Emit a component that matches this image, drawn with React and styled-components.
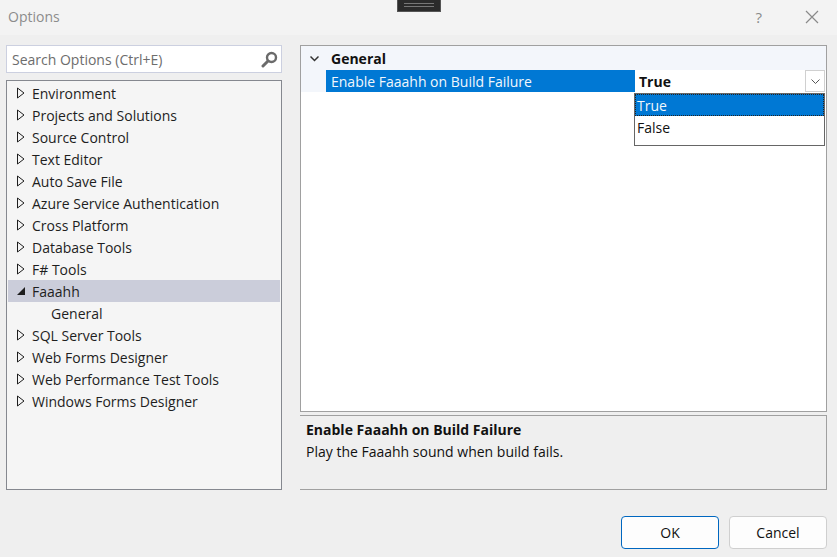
import React from 'react';
import styled, { createGlobalStyle } from 'styled-components';

const GlobalStyle = createGlobalStyle`
  html, body {
    margin: 0;
    padding: 0;
    background: #efefef;
  }
  body {
    font-family: "Open Sans", "Noto Sans", sans-serif;
    font-size: 14px;
    color: #1b1b1b;
  }
`;

const treeItems = [
  { label: 'Environment' },
  { label: 'Projects and Solutions' },
  { label: 'Source Control' },
  { label: 'Text Editor' },
  { label: 'Auto Save File' },
  { label: 'Azure Service Authentication' },
  { label: 'Cross Platform' },
  { label: 'Database Tools' },
  { label: 'F# Tools' },
  { label: 'Faaahh', open: true },
  { label: 'General', child: true },
  { label: 'SQL Server Tools' },
  { label: 'Web Forms Designer' },
  { label: 'Web Performance Test Tools' },
  { label: 'Windows Forms Designer' },
];

const SearchIcon = () => (
  <svg width="17" height="17" viewBox="0 0 17 17">
    <circle cx="10.5" cy="6.5" r="4.5" fill="none" stroke="#6b6b6b" strokeWidth="2.4" />
    <path d="M7 10 L2 15" stroke="#6b6b6b" strokeWidth="3" strokeLinecap="round" />
  </svg>
);

const Arrow = ({ open }) =>
  open ? (
    <svg width="10" height="10" viewBox="0 0 10 10">
      <path d="M9 1 V9 H1 Z" fill="#1e1e1e" />
    </svg>
  ) : (
    <svg width="10" height="12" viewBox="0 0 10 12">
      <path d="M1.5 1 L8 6 L1.5 11 Z" fill="none" stroke="#1e1e1e" strokeWidth="1" />
    </svg>
  );

const Chevron = ({ size = 9, color = '#444', width = 1 }) => (
  <svg width={size} height={size} viewBox="0 0 9 9">
    <path d="M0.5 2.5 L4.5 6.5 L8.5 2.5" fill="none" stroke={color} strokeWidth={width} />
  </svg>
);

const App = () => {
  return (
    <Dialog>
      <GlobalStyle />
      <Grip>
        <GripLine />
      </Grip>
      <TitleBar>
        <Title>Options</Title>
        <TitleButtons>
          <Help>?</Help>
          <svg width="14" height="14" viewBox="0 0 14 14">
            <path d="M1 1 L13 13 M13 1 L1 13" stroke="#8a8a8a" strokeWidth="1.2" />
          </svg>
        </TitleButtons>
      </TitleBar>
      <Body>
        <LeftColumn>
          <Search>
            <SearchText>Search Options (Ctrl+E)</SearchText>
            <SearchIcon />
          </Search>
          <Tree>
            {treeItems.map((item) => (
              <TreeRow key={item.label} $selected={item.open} $child={item.child}>
                {!item.child && (
                  <ArrowSlot>
                    <Arrow open={item.open} />
                  </ArrowSlot>
                )}
                {item.label}
              </TreeRow>
            ))}
          </Tree>
        </LeftColumn>
        <RightColumn>
          <PropertyGrid>
            <CategoryRow>
              <CategoryToggle>
                <Chevron size={9} color="#333" width={1.5} />
              </CategoryToggle>
              General
            </CategoryRow>
            <PropertyRow>
              <PropertyGutter />
              <PropertyName>Enable Faaahh on Build Failure</PropertyName>
              <PropertyValue>True</PropertyValue>
              <DropButton>
                <Chevron size={9} color="#555" />
              </DropButton>
            </PropertyRow>
            <DropList>
              <DropItem $active>True</DropItem>
              <DropItem>False</DropItem>
            </DropList>
          </PropertyGrid>
          <Description>
            <DescriptionTitle>Enable Faaahh on Build Failure</DescriptionTitle>
            <div>Play the Faaahh sound when build fails.</div>
          </Description>
        </RightColumn>
      </Body>
      <Footer>
        <Button $primary>OK</Button>
        <Button>Cancel</Button>
      </Footer>
    </Dialog>
  );
};

const Dialog = styled.div`
  position: relative;
  width: 837px;
  height: 557px;
  overflow: hidden;
  background: #efefef;
`;

const Grip = styled.div`
  position: absolute;
  top: 0;
  left: 397px;
  width: 44px;
  height: 12px;
  box-sizing: border-box;
  padding-top: 3px;
  background: #2b2b2b;
  border: 1px solid #555;
  border-top: 0;
  display: flex;
  justify-content: center;
`;

const GripLine = styled.div`
  width: 30px;
  height: 4px;
  box-sizing: border-box;
  border-top: 1px solid #777;
  border-bottom: 1px solid #777;
`;

const TitleBar = styled.div`
  height: 35px;
  background: #f3f3f3;
  display: flex;
  align-items: center;
  justify-content: space-between;
  padding: 0 18px 2px 8px;
  box-sizing: border-box;
`;

const Title = styled.div`
  color: #8c8c8c;
  font-size: 14px;
`;

const TitleButtons = styled.div`
  display: flex;
  align-items: center;
  gap: 43px;
`;

const Help = styled.div`
  color: #8a8a8a;
  font-size: 15px;
`;

const Body = styled.div`
  display: flex;
  padding: 10px 10px 0 6px;
  gap: 18px;
`;

const LeftColumn = styled.div`
  width: 276px;
  display: flex;
  flex-direction: column;
  gap: 7px;
`;

const Search = styled.div`
  height: 28px;
  box-sizing: border-box;
  background: #fff;
  border: 1px solid #ccd0e0;
  display: flex;
  align-items: center;
  justify-content: space-between;
  padding: 0 3px 0 5px;
`;

const SearchText = styled.span`
  color: #6d6d6d;
`;

const Tree = styled.div`
  height: 410px;
  box-sizing: border-box;
  background: #f5f5f5;
  border: 1px solid #85888f;
  padding: 1px;
`;

const TreeRow = styled.div`
  height: 22px;
  display: flex;
  align-items: center;
  padding-left: ${(p) => (p.$child ? '43px' : '8px')};
  background: ${(p) => (p.$selected ? '#cbcdda' : 'transparent')};
  color: #1e1e1e;
  white-space: nowrap;
`;

const ArrowSlot = styled.span`
  width: 16px;
  display: flex;
  align-items: center;
`;

const RightColumn = styled.div`
  width: 527px;
  display: flex;
  flex-direction: column;
  gap: 3px;
`;

const PropertyGrid = styled.div`
  position: relative;
  height: 367px;
  box-sizing: border-box;
  background: #fff;
  border: 1px solid #a0a0a0;
`;

const CategoryRow = styled.div`
  height: 24px;
  display: flex;
  align-items: center;
  background: #f3f6fb;
  font-weight: 700;
  color: #111;
`;

const CategoryToggle = styled.span`
  width: 30px;
  display: flex;
  justify-content: center;
  padding-right: 4px;
  box-sizing: border-box;
`;

const PropertyRow = styled.div`
  position: relative;
  height: 22px;
  display: flex;
  align-items: center;
`;

const PropertyGutter = styled.div`
  width: 25px;
  height: 100%;
  background: #f3f6fb;
`;

const PropertyName = styled.div`
  width: 309px;
  height: 100%;
  padding-left: 5px;
  box-sizing: border-box;
  display: flex;
  align-items: center;
  background: #0078d4;
  color: #f2f7fc;
`;

const PropertyValue = styled.div`
  padding-left: 4px;
  font-weight: 700;
  color: #111;
`;

const DropButton = styled.div`
  position: absolute;
  right: 1px;
  top: 0;
  width: 20px;
  height: 22px;
  box-sizing: border-box;
  background: #fff;
  border: 1px solid #d0d0d0;
  display: flex;
  align-items: center;
  justify-content: center;
`;

const DropList = styled.div`
  position: absolute;
  top: 47px;
  left: 333px;
  width: 191px;
  height: 53px;
  box-sizing: border-box;
  background: #fff;
  border: 1px solid #666;
`;

const DropItem = styled.div`
  height: 22px;
  display: flex;
  align-items: center;
  padding-left: 2px;
  box-sizing: border-box;
  background: ${(p) => (p.$active ? '#0078d4' : '#fff')};
  color: ${(p) => (p.$active ? '#f2f7fc' : '#111')};
  outline: ${(p) => (p.$active ? '1px dotted #222' : 'none')};
  outline-offset: -1px;
`;

const Description = styled.div`
  height: 75px;
  box-sizing: border-box;
  border-top: 1px solid #a0a0a0;
  border-bottom: 1px solid #a0a0a0;
  border-right: 1px solid #a0a0a0;
  padding: 3px 6px;
  line-height: 22px;
  color: #111;
`;

const DescriptionTitle = styled.div`
  font-weight: 700;
`;

const Footer = styled.div`
  display: flex;
  justify-content: flex-end;
  gap: 10px;
  padding: 26px 10px 0 0;
`;

const Button = styled.button`
  width: 98px;
  height: 33px;
  background: #fdfdfd;
  border: 1px solid ${(p) => (p.$primary ? '#0067c0' : '#cfcfcf')};
  border-radius: 4px;
  font-family: inherit;
  font-size: 14px;
  color: #111;
  padding: 0;
`;

export default App;
